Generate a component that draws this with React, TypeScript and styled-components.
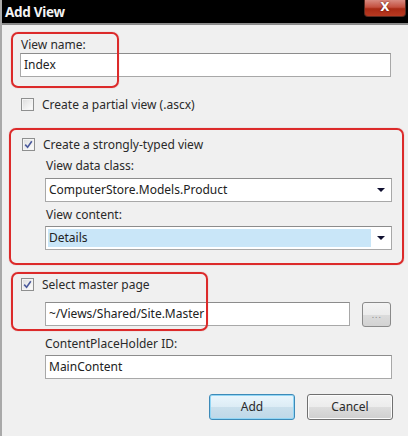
import React from "react";
import styled, { createGlobalStyle } from "styled-components";

const Global = createGlobalStyle`
  html, body { margin: 0; padding: 0; background: #f0f0f0; }
  body { font-family: "Noto Sans", "Open Sans", sans-serif; }
  * { box-sizing: border-box; }
`;

const Window = styled.div`
  width: 408px;
  height: 436px;
  background: #f0f0f0;
  border-left: 2px solid #a9a9a9;
  display: flex;
  flex-direction: column;
  overflow: hidden;
`;

const TitleBar = styled.div`
  height: 25px;
  background: #000;
  display: flex;
  justify-content: space-between;
  align-items: flex-start;
  padding: 0 2px 0 3px;
  border-bottom: 2px solid #8a8a8a;
  flex: none;
`;

const Title = styled.div`
  color: #f4f4f4;
  font-weight: 700;
  font-size: 13.5px;
  line-height: 25px;
  letter-spacing: -0.3px;
`;

const CloseButton = styled.div`
  width: 42px;
  height: 17px;
  margin-left: auto;
  background: linear-gradient(#d88a80 0%, #c4503f 45%, #a82a14 55%, #b83a22 100%);
  border: 1px solid #5a2a20;
  border-top: none;
  border-radius: 0 0 4px 4px;
  color: #fff;
  font-family: "DejaVu Sans", sans-serif;
  font-weight: 700;
  font-size: 12px;
  line-height: 15px;
  text-align: center;
  text-shadow: 0 0 2px #5a1000;
`;

const Body = styled.div`
  display: flex;
  flex-direction: column;
  padding: 12px 0 0 18px;
  color: #1c1c1c;
  font-size: 12px;
`;

const Section = styled.div<{ $mt?: number }>`
  position: relative;
  display: flex;
  flex-direction: column;
  margin-top: ${(p) => p.$mt ?? 0}px;
`;

const Highlight = styled.div<{ $l: number; $t: number; $w: number; $h: number }>`
  position: absolute;
  left: ${(p) => p.$l}px;
  top: ${(p) => p.$t}px;
  width: ${(p) => p.$w}px;
  height: ${(p) => p.$h}px;
  border: 2px solid #dc2a2a;
  border-radius: 7px;
  box-shadow: 0 0 1px rgba(200, 30, 30, 0.5);
  pointer-events: none;
`;

const FrameBox = styled.div`
  margin: 16px 0 0 -11px;
  width: 395px;
  border: 2px solid #dc2a2a;
  border-radius: 7px;
  box-shadow: 0 0 1px rgba(200, 30, 30, 0.5);
  padding: 6px 0 13px 10px;
  display: flex;
  flex-direction: column;
`;

const Label = styled.div<{ $mt?: number; $indent?: boolean }>`
  height: 16px;
  line-height: 16px;
  margin-top: ${(p) => p.$mt ?? 0}px;
  margin-left: ${(p) => (p.$indent ? 25 : 1)}px;
  color: #2a2a2a;
`;

const TextBox = styled.div<{ $mt?: number; $indent?: boolean; $w: number }>`
  height: 24px;
  width: ${(p) => p.$w}px;
  margin-top: ${(p) => p.$mt ?? 0}px;
  margin-left: ${(p) => (p.$indent ? 25 : 0)}px;
  background: #fff;
  border: 1px solid #a8a8a8;
  border-top-color: #8c8c8c;
  padding: 0 3px;
  line-height: 22px;
  color: #222;
  display: flex;
  align-items: center;
`;

const Combo = styled.div<{ $mt?: number }>`
  height: 24px;
  width: 347px;
  margin-top: ${(p) => p.$mt ?? 0}px;
  margin-left: 24px;
  background: #fff;
  border: 1px solid #a8a8a8;
  border-top-color: #8c8c8c;
  padding: 2px;
  display: flex;
  align-items: stretch;
`;

const ComboValue = styled.div<{ $selected?: boolean }>`
  flex: 1;
  margin-right: 6px;
  padding-left: 1px;
  line-height: 18px;
  background: ${(p) => (p.$selected ? "#c9e6f8" : "transparent")};
  color: #222;
`;

const ComboArrow = styled.div`
  width: 0;
  height: 0;
  align-self: center;
  margin-right: 4px;
  border-left: 4px solid transparent;
  border-right: 4px solid transparent;
  border-top: 4px solid #101030;
`;

const CheckRow = styled.div<{ $mt?: number }>`
  display: flex;
  align-items: center;
  height: 16px;
  margin-top: ${(p) => p.$mt ?? 0}px;
  margin-left: 1px;
  gap: 8px;
  color: #2a2a2a;
`;

const CheckBox = styled.div`
  width: 13px;
  height: 13px;
  border: 1px solid #8e8f8f;
  background: linear-gradient(135deg, #dcdcdc, #ffffff);
  box-shadow: inset 0 0 0 1px #f4f4f4;
  display: flex;
  align-items: center;
  justify-content: center;
`;

const Row = styled.div<{ $mt?: number }>`
  display: flex;
  align-items: center;
  margin-top: ${(p) => p.$mt ?? 0}px;
`;

const SmallButton = styled.div`
  width: 29px;
  height: 25px;
  margin-left: 12px;
  margin-top: 1px;
  border: 1px solid #8a8a8a;
  border-radius: 3px;
  background: linear-gradient(#f4f4f4 0%, #ececec 50%, #dcdcdc 51%, #d2d2d2 100%);
  color: #8c8c8c;
  font-family: "DejaVu Sans", sans-serif;
  font-size: 9px;
  line-height: 24px;
  text-align: center;
  letter-spacing: 0.5px;
`;

const ButtonRow = styled.div`
  display: flex;
  justify-content: flex-end;
  gap: 12px;
  margin-top: 15px;
  width: 373px;
`;

const Button = styled.div<{ $default?: boolean }>`
  width: 86px;
  height: 26px;
  border: 1px solid ${(p) => (p.$default ? "#3d8ab8" : "#707070")};
  border-radius: 3px;
  background: ${(p) =>
    p.$default
      ? "linear-gradient(#eaf6fd 0%, #dcecf5 50%, #c9dfec 51%, #bfd8e8 100%)"
      : "linear-gradient(#f4f4f4 0%, #ececec 50%, #dddddd 51%, #cfcfcf 100%)"};
  box-shadow: ${(p) => (p.$default ? "inset 0 0 0 1px #92d6f5" : "inset 0 0 0 1px #fcfcfc")};
  font-size: 12px;
  line-height: 24px;
  text-align: center;
  color: #2a2a2a;
`;

const Check = () => (
  <svg width="9" height="9" viewBox="0 0 9 9">
    <path d="M1.2 4.6 L3.6 7.2 L7.8 1.2" fill="none" stroke="#4b5a9c" strokeWidth="1.6" />
  </svg>
);

export default function App() {
  return (
    <>
      <Global />
      <Window>
        <TitleBar>
          <Title>Add View</Title>
          <CloseButton>X</CloseButton>
        </TitleBar>
        <Body>
          <Section>
            <Highlight $l={-9} $t={-5} $w={108} $h={56} />
            <Label>View name:</Label>
            <TextBox $w={371}>Index</TextBox>
          </Section>

          <CheckRow $mt={19}>
            <CheckBox />
            <span>Create a partial view (.ascx)</span>
          </CheckRow>

          <FrameBox>
            <CheckRow>
              <CheckBox>
                <Check />
              </CheckBox>
              <span>Create a strongly-typed view</span>
            </CheckRow>
            <Label $mt={6} $indent>
              View data class:
            </Label>
            <Combo $mt={4}>
              <ComboValue>ComputerStore.Models.Product</ComboValue>
              <ComboArrow />
            </Combo>
            <Label $mt={5} $indent>
              View content:
            </Label>
            <Combo $mt={3}>
              <ComboValue $selected>Details</ComboValue>
              <ComboArrow />
            </Combo>
          </FrameBox>

          <Section $mt={11}>
            <Highlight $l={-9} $t={-4} $w={197} $h={59} />
            <CheckRow>
              <CheckBox>
                <Check />
              </CheckBox>
              <span>Select master page</span>
            </CheckRow>
            <Row $mt={9}>
              <TextBox $indent $w={305}>~/Views/Shared/Site.Master</TextBox>
              <SmallButton>...</SmallButton>
            </Row>
          </Section>

          <Label $mt={9} $indent>
            ContentPlaceHolder ID:
          </Label>
          <TextBox $mt={3} $indent $w={347}>MainContent</TextBox>

          <ButtonRow>
            <Button $default>Add</Button>
            <Button>Cancel</Button>
          </ButtonRow>
        </Body>
      </Window>
    </>
  );
}
